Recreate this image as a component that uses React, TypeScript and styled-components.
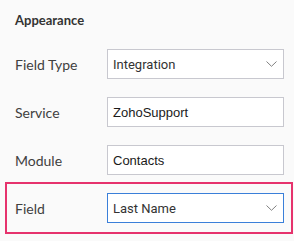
import React from "react";
import styled, { createGlobalStyle } from "styled-components";

const GlobalStyle = createGlobalStyle`
  html, body {
    margin: 0;
    padding: 0;
    background: #fafafa;
  }
`;

const Panel = styled.div`
  width: 294px;
  height: 241px;
  box-sizing: border-box;
  padding: 14px 3px 0 7px;
  background: #fafafa;
  font-family: Lato, "Open Sans", sans-serif;
`;

const Title = styled.div`
  padding-left: 8px;
  height: 26px;
  font-size: 13px;
  font-weight: 700;
  color: #333;
  line-height: 13px;
`;

const Row = styled.div<{ $active?: boolean }>`
  display: flex;
  align-items: center;
  height: 48px;
  box-sizing: border-box;
  padding: 9px 7px 9px 8px;
  outline: ${({ $active }) => ($active ? "2px solid #e6336d" : "none")};
`;

const Label = styled.div`
  width: 92px;
  font-size: 14px;
  color: #404040;
`;

const Box = styled.div<{ $focus?: boolean }>`
  flex: 1;
  height: 30px;
  box-sizing: border-box;
  display: flex;
  align-items: center;
  padding: 0 6px 0 5px;
  background: #fff;
  border: 1px solid ${({ $focus }) => ($focus ? "#3a7fd9" : "#c8c8cf")};
`;

const SelectText = styled.span`
  flex: 1;
  font-family: Roboto, "Liberation Sans", sans-serif;
  font-size: 13px;
  color: #333;
`;

const InputText = styled.span`
  font-family: "Liberation Sans", Arial, sans-serif;
  font-size: 13px;
  color: #1a1a1a;
`;

const Chevron = () => (
  <svg width="11" height="6" viewBox="0 0 11 6">
    <path d="M0.5 0.5 L5.5 5.3 L10.5 0.5" fill="none" stroke="#808080" strokeWidth="1" />
  </svg>
);

type Field = { label: string; value: string; select?: boolean; active?: boolean };

const fields: Field[] = [
  { label: "Field Type", value: "Integration", select: true },
  { label: "Service", value: "ZohoSupport" },
  { label: "Module", value: "Contacts" },
  { label: "Field", value: "Last Name", select: true, active: true },
];

export default function App() {
  return (
    <>
      <GlobalStyle />
      <Panel>
        <Title>Appearance</Title>
        {fields.map((f) => (
          <Row key={f.label} $active={f.active}>
            <Label>{f.label}</Label>
            <Box $focus={f.active}>
              {f.select ? (
                <>
                  <SelectText>{f.value}</SelectText>
                  <Chevron />
                </>
              ) : (
                <InputText>{f.value}</InputText>
              )}
            </Box>
          </Row>
        ))}
      </Panel>
    </>
  );
}
